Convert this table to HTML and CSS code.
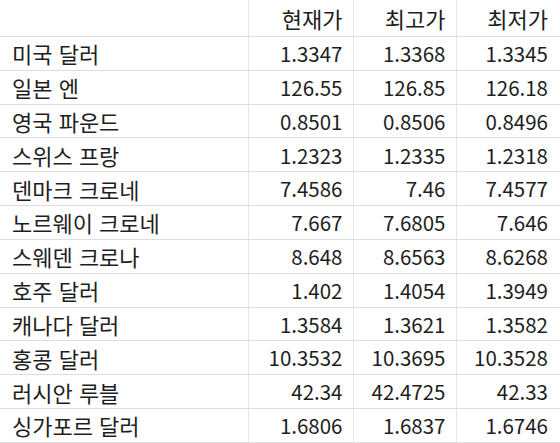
FILE: index.html
```html
<!DOCTYPE html>
<html lang="ko">
<head>
<meta charset="utf-8">
<link rel="stylesheet" href="styles.css">
</head>
<body>
<table class="rates">
  <colgroup>
    <col class="c-name"><col class="c-num"><col class="c-num2"><col class="c-num3">
  </colgroup>
  <thead>
    <tr class="head"><th></th><th>현재가</th><th>최고가</th><th>최저가</th></tr>
  </thead>
  <tbody>
    <tr><td>미국 달러</td><td>1.3347</td><td>1.3368</td><td>1.3345</td></tr>
    <tr><td>일본 엔</td><td>126.55</td><td>126.85</td><td>126.18</td></tr>
    <tr><td>영국 파운드</td><td>0.8501</td><td>0.8506</td><td>0.8496</td></tr>
    <tr><td>스위스 프랑</td><td>1.2323</td><td>1.2335</td><td>1.2318</td></tr>
    <tr><td>덴마크 크로네</td><td>7.4586</td><td>7.46</td><td>7.4577</td></tr>
    <tr><td>노르웨이 크로네</td><td>7.667</td><td>7.6805</td><td>7.646</td></tr>
    <tr><td>스웨덴 크로나</td><td>8.648</td><td>8.6563</td><td>8.6268</td></tr>
    <tr><td>호주 달러</td><td>1.402</td><td>1.4054</td><td>1.3949</td></tr>
    <tr><td>캐나다 달러</td><td>1.3584</td><td>1.3621</td><td>1.3582</td></tr>
    <tr><td>홍콩 달러</td><td>10.3532</td><td>10.3695</td><td>10.3528</td></tr>
    <tr><td>러시안 루블</td><td>42.34</td><td>42.4725</td><td>42.33</td></tr>
    <tr><td>싱가포르 달러</td><td>1.6806</td><td>1.6837</td><td>1.6746</td></tr>
  </tbody>
</table>
</body>
</html>
```
FILE: styles.css
```css
html, body {
  margin: 0;
  padding: 0;
  background: #ffffff;
}
.rates {
  width: 560px;
  border-collapse: collapse;
  table-layout: fixed;
  font-family: "Noto Sans CJK KR", "Noto Sans", sans-serif;
  font-size: 20.5px;
  color: #1e1e1e;
}
.c-name { width: 248px; }
.c-num { width: 105px; }
.c-num2 { width: 103px; }
.c-num3 { width: 104px; }
.rates th,
.rates td {
  padding: 0 10px 0 12px;
  border-bottom: 1px solid #dedede;
  border-right: 1px solid #e6e6e6;
  text-align: right;
  font-weight: normal;
  white-space: nowrap;
  line-height: 1;
}
.rates th:last-child,
.rates td:last-child {
  border-right: none;
  padding-right: 12px;
}
.rates td:first-child {
  text-align: left;
  font-size: 22px;
}
.head th {
  height: 36px;
  font-size: 22px;
}
.rates tbody tr {
  height: 33.82px;
}
```
